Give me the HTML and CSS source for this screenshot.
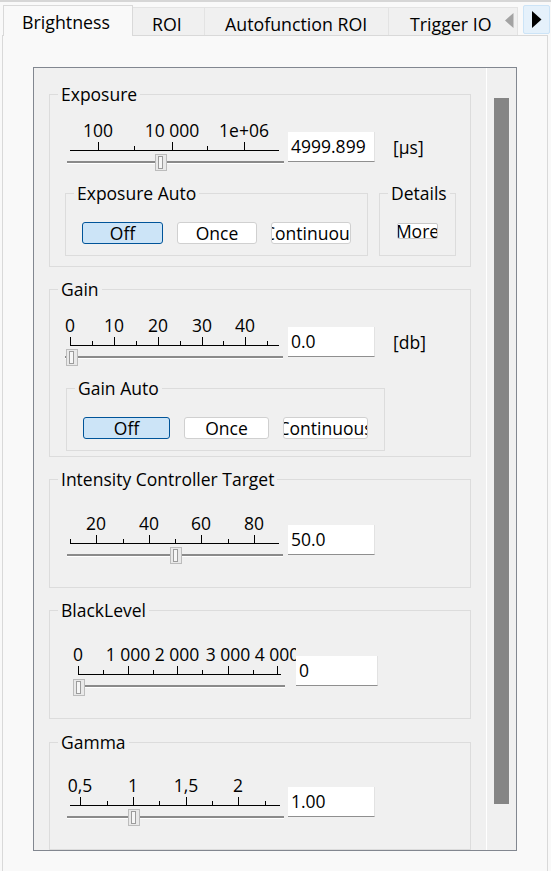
FILE: index.html
```html
<!DOCTYPE html>
<html>
<head>
<meta charset="utf-8">
<link rel="stylesheet" href="styles.css">
</head>
<body>
<div class="tabstrip">
  <div class="tab selected t-bright">Brightness</div>
  <div class="tab t-roi">ROI</div>
  <div class="tab t-auto">Autofunction ROI</div>
  <div class="tab t-trig">Trigger IO</div>
  <svg class="arrow-left" width="9" height="15" viewBox="0 0 9 15"><polygon points="8.5,0 8.5,15 0,7.5" fill="#a3a3a3"/></svg>
  <div class="arrow-btn"><svg width="10" height="17" viewBox="0 0 10 17"><polygon points="0,0 0,17 9.5,8.5" fill="#000"/></svg></div>
</div>
<div class="tabpage">
  <div class="panel">
    <div class="content">
      <fieldset class="group g-exposure">
        <legend>Exposure</legend>
        <div class="slider-row">
          <svg class="scale" width="226" height="60" viewBox="0 0 226 60">
            <text x="36" y="22">100</text><text x="110" y="22">10 000</text><text x="182" y="22">1e+06</text>
            <path class="ticks" d="M8 35.5H217M36.5 27V35M110.5 27V35M182.5 27V35M72.5 31V35M145.5 31V35"/>
            <rect class="track" x="5" y="46" width="217" height="2"/><rect class="track-hi" x="5" y="48" width="217" height="1"/>
            <g transform="translate(93 39)"><rect class="thumb-o" x="0.5" y="0.5" width="11" height="16"/><rect class="thumb-i" x="3.5" y="2.5" width="4" height="12"/></g>
          </svg>
          <div class="textbox">4999.899</div>
          <div class="unit">[µs]</div>
        </div>
        <div class="auto-row">
          <fieldset class="sub sub-exp">
            <legend>Exposure Auto</legend>
            <div class="buttons b-exp">
              <div class="btn active">Off</div>
              <div class="btn">Once</div>
              <div class="btn">Continuous</div>
            </div>
          </fieldset>
          <fieldset class="sub sub-details">
            <legend>Details</legend>
            <div class="btn more">More</div>
          </fieldset>
        </div>
      </fieldset>

      <fieldset class="group g-gain">
        <legend>Gain</legend>
        <div class="slider-row">
          <svg class="scale" width="226" height="60" viewBox="0 0 226 60">
            <text x="8" y="22">0</text><text x="52" y="22">10</text><text x="96" y="22">20</text><text x="140" y="22">30</text><text x="183" y="22">40</text>
            <path class="ticks" d="M8 35.5H217M8.5 27V35M52.5 27V35M96.5 27V35M140.5 27V35M183.5 27V35M30.5 31V35M74.5 31V35M118.5 31V35M161.5 31V35M205.5 31V35"/>
            <rect class="track" x="3" y="46" width="218" height="2"/><rect class="track-hi" x="3" y="48" width="218" height="1"/>
            <g transform="translate(4 39)"><rect class="thumb-o" x="0.5" y="0.5" width="11" height="16"/><rect class="thumb-i" x="3.5" y="2.5" width="4" height="12"/></g>
          </svg>
          <div class="textbox">0.0</div>
          <div class="unit">[db]</div>
        </div>
        <div class="auto-row r-gain">
          <fieldset class="sub sub-gain">
            <legend>Gain Auto</legend>
            <div class="buttons b-gain">
              <div class="btn active">Off</div>
              <div class="btn">Once</div>
              <div class="btn">Continuous</div>
            </div>
          </fieldset>
        </div>
      </fieldset>

      <fieldset class="group g-plain">
        <legend>Intensity Controller Target</legend>
        <div class="slider-row r-wide">
          <svg class="scale" width="226" height="60" viewBox="0 0 226 60">
            <text x="34" y="22">20</text><text x="87" y="22">40</text><text x="139" y="22">60</text><text x="192" y="22">80</text>
            <path class="ticks" d="M8 35.5H217M34.5 27V35M87.5 27V35M139.5 27V35M192.5 27V35M8.5 31V35M61.5 31V35M113.5 31V35M166.5 31V35"/>
            <rect class="track" x="5" y="46" width="216" height="2"/><rect class="track-hi" x="5" y="48" width="216" height="1"/>
            <g transform="translate(108 39)"><rect class="thumb-o" x="0.5" y="0.5" width="11" height="16"/><rect class="thumb-i" x="3.5" y="2.5" width="4" height="12"/></g>
          </svg>
          <div class="textbox">50.0</div>
        </div>
      </fieldset>

      <fieldset class="group g-plain g-black">
        <legend>BlackLevel</legend>
        <div class="slider-row r-wide r-black">
          <svg class="scale" width="226" height="60" viewBox="0 0 226 60">
            <text x="8" y="22">0</text><text x="58" y="22">1 000</text><text x="107" y="22">2 000</text><text x="158" y="22">3 000</text><text x="207" y="22">4 000</text>
            <path class="ticks" d="M8 35.5H211M8.5 27V35M58.5 27V35M107.5 27V35M158.5 27V35M207.5 27V35M33.5 31V35M83.5 31V35M132.5 31V35M183.5 31V35"/>
            <rect class="track" x="3" y="46" width="212" height="2"/><rect class="track-hi" x="3" y="48" width="212" height="1"/>
            <g transform="translate(3 40)"><rect class="thumb-o" x="0.5" y="0.5" width="11" height="16"/><rect class="thumb-i" x="3.5" y="2.5" width="4" height="12"/></g>
          </svg>
          <div class="textbox tb-black">0</div>
        </div>
      </fieldset>

      <fieldset class="group g-plain g-gamma">
        <legend>Gamma</legend>
        <div class="slider-row r-gamma">
          <svg class="scale" width="226" height="60" viewBox="0 0 226 60">
            <text x="18" y="22">0,5</text><text x="71" y="22">1</text><text x="124" y="22">1,5</text><text x="176" y="22">2</text>
            <path class="ticks" d="M8 35.5H218M18.5 27V35M71.5 27V35M124.5 27V35M176.5 27V35M45.5 31V35M97.5 31V35M150.5 31V35M203.5 31V35"/>
            <rect class="track" x="5" y="46" width="217" height="2"/><rect class="track-hi" x="5" y="48" width="217" height="1"/>
            <g transform="translate(66 39)"><rect class="thumb-o" x="0.5" y="0.5" width="11" height="16"/><rect class="thumb-i" x="3.5" y="2.5" width="4" height="12"/></g>
          </svg>
          <div class="textbox">1.00</div>
        </div>
      </fieldset>
    </div>
    <div class="scrollbar"><div class="thumb"></div></div>
  </div>
</div>
</body>
</html>
```
FILE: styles.css
```css
* { box-sizing: border-box; }
html, body { margin: 0; padding: 0; }
body {
  width: 551px;
  height: 871px;
  overflow: hidden;
  background: #f9f9f9;
  border-top: 2px solid #d6d6d6;
  font-family: "Open Sans", "Noto Sans", sans-serif;
  font-size: 17.5px;
  color: #000;
}

/* tabs */
.tabstrip {
  position: relative;
  display: flex;
  align-items: flex-end;
  height: 33px;
  padding-left: 3px;
}
.tab {
  flex: none;
  height: 28px;
  padding: 4px 0 0 19px;
  line-height: 24px;
  font-size: 17.8px;
  white-space: nowrap;
  overflow: hidden;
  background: #f0f0f0;
  border-top: 1px solid #e3e3e3;
  border-right: 1px solid #e3e3e3;
}
.tab.selected {
  height: 31px;
  margin-bottom: -1px;
  padding: 4px 0 0 18px;
  background: #f9f9f9;
  border: 1px solid #d9d9d9;
  border-bottom: none;
  position: relative;
  z-index: 1;
}
.t-bright { width: 130px; }
.t-roi { width: 72px; }
.t-auto { width: 184px; padding-left: 20px; }
.t-trig { width: 129px; padding-left: 21px; }
.arrow-left {
  position: absolute;
  left: 505px;
  top: 11px;
}
.arrow-btn {
  position: absolute;
  left: 523px;
  top: 3px;
  width: 27px;
  height: 29px;
  background: #e5f1fb;
  border: 1px solid #cce4f7;
  border-radius: 2px;
  display: flex;
  align-items: center;
  justify-content: center;
  padding-left: 1px;
}
.arrow-btn svg { display: block; }

/* tab page */
.tabpage {
  margin-left: 2px;
  width: 546px;
  height: 836px;
  border: 1px solid #d9d9d9;
  border-bottom: none;
  padding: 31px 30px 0;
}
.panel {
  display: flex;
  width: 484px;
  height: 784px;
  border: 1px solid #828790;
  background: #f0f0f0;
}
.content {
  flex: 1;
  min-width: 0;
  overflow: hidden;
  padding: 16px 15px 0;
}
.scrollbar {
  flex: none;
  width: 30px;
  border-left: 1px solid #ffffff;
  padding: 30px 7px 0;
}
.thumb {
  height: 706px;
  background: #858585;
}

/* group boxes */
.group, .sub {
  margin: 0;
  padding: 0;
  min-width: 0;
  border: 1px solid #dcdcdc;
}
.group { margin-bottom: 12px; }
.group > legend, .sub > legend {
  margin-left: 8px;
  padding: 0 3px;
  line-height: 21px;
  white-space: nowrap;
}
.g-exposure { padding-bottom: 10px; }
.g-gain { padding-bottom: 5px; }
.g-plain { padding-bottom: 19px; }
.g-black { margin-bottom: 13px; }

/* slider rows */
.slider-row {
  display: flex;
  align-items: flex-start;
  margin: 10px 0 0 12px;
}
.r-wide { margin-top: 18px; }
.r-black { margin-left: 20px; }
.r-gamma { margin-top: 17px; }
.scale {
  display: block;
  flex: none;
  overflow: hidden;
}
.scale text {
  font-family: "Open Sans", "Noto Sans", sans-serif;
  font-size: 17.5px;
  text-anchor: middle;
  fill: #000;
}
.ticks {
  fill: none;
  stroke: #000;
  stroke-width: 1;
  shape-rendering: crispEdges;
}
.track { fill: #8a8a8a; shape-rendering: crispEdges; }
.track-hi { fill: #ffffff; shape-rendering: crispEdges; }
.thumb-o { fill: #e9e9e9; stroke: #bcbcbc; shape-rendering: crispEdges; }
.thumb-i { fill: #f6f6f6; stroke: #9c9c9c; shape-rendering: crispEdges; }

.textbox {
  flex: none;
  width: 87px;
  height: 30px;
  margin-top: 17px;
  padding-left: 3px;
  line-height: 29px;
  background: #ffffff;
  border-right: 1px solid #e2e2e2;
  border-bottom: 1px solid #8f8f8f;
  white-space: nowrap;
}
.tb-black { width: 82px; }
.unit {
  flex: none;
  margin: 17px 0 0 18px;
  line-height: 30px;
}

/* auto rows */
.auto-row {
  display: flex;
  gap: 11px;
  margin: 8px 0 0 15px;
}
.r-gain { margin-left: 16px; }
.sub { padding-bottom: 11px; }
.sub-exp { width: 303px; }
.sub-details { width: 77px; }
.sub-gain { width: 319px; }

.buttons {
  display: flex;
  gap: 14px;
  margin-top: 18px;
  padding-left: 16px;
}
.btn {
  flex: none;
  height: 22px;
  display: flex;
  align-items: center;
  justify-content: center;
  overflow: hidden;
  white-space: nowrap;
  line-height: 20px;
  background: #ffffff;
  border: 1px solid #d0d0d0;
  border-radius: 3px;
}
.btn.active {
  background: #cce4f7;
  border-color: #005499;
}
.b-exp .btn { width: 80px; }
.b-exp .btn:first-child { width: 81px; }
.b-gain .btn { width: 85px; }
.b-gain .btn:first-child { width: 87px; }
.btn.more {
  width: 41px;
  height: 16px;
  margin: 19px 0 0 17px;
  border-radius: 2px;
  border-color: #c8c8c8;
}
```
